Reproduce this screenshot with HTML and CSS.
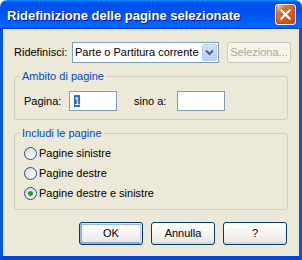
FILE: index.html
```html
<!DOCTYPE html>
<html lang="it">
<head>
    <meta charset="UTF-8">
    <title>Ridefinizione delle pagine selezionate</title>
    <link rel="stylesheet" href="styles.css">
</head>
<body>
    <div class="window">
        <div class="title-bar">
            <div class="title-text">Ridefinizione delle pagine selezionate</div>
            <div class="close-button">
                <svg width="13" height="13" viewBox="0 0 13 13">
                    <path d="M2.5 2.5 L10.5 10.5 M10.5 2.5 L2.5 10.5" stroke="#fff" stroke-width="2.2" stroke-linecap="square"/>
                </svg>
            </div>
        </div>

        <div class="window-body">
            <!-- riga combo -->
            <div class="row top-row">
                <span class="label redefine-label">Ridefinisci:</span>
                <div class="combo">
                    <span class="combo-text">Parte o Partitura corrente</span>
                    <span class="combo-arrow">
                        <svg width="9" height="7" viewBox="0 0 9 7">
                            <path d="M1 1.5 L4.5 5 L8 1.5" stroke="#4d6185" stroke-width="2" fill="none"/>
                        </svg>
                    </span>
                </div>
                <div class="button disabled select-button">Seleziona...</div>
            </div>

            <!-- ambito di pagine -->
            <fieldset class="group">
                <legend>Ambito di pagine</legend>
                <div class="row range-row">
                    <span class="label page-label">Pagina:</span>
                    <div class="text-input"><span class="selected">1</span></div>
                    <span class="label until-label">sino a:</span>
                    <div class="text-input"></div>
                </div>
            </fieldset>

            <!-- includi le pagine -->
            <fieldset class="group include-group">
                <legend>Includi le pagine</legend>
                <div class="radio-row">
                    <span class="radio"></span>
                    <span>Pagine sinistre</span>
                </div>
                <div class="radio-row">
                    <span class="radio"></span>
                    <span>Pagine destre</span>
                </div>
                <div class="radio-row">
                    <span class="radio checked"></span>
                    <span>Pagine destre e sinistre</span>
                </div>
            </fieldset>

            <div class="button-row">
                <div class="button default">OK</div>
                <div class="button">Annulla</div>
                <div class="button">?</div>
            </div>
        </div>
    </div>
</body>
</html>
```

FILE: styles.css
```css
body, html {
    margin: 0;
    padding: 0;
    width: 100%;
    height: 100%;
    overflow: hidden;
    background-color: #ffffff;
}

.window {
    width: 302px;
    height: 260px;
    display: flex;
    flex-direction: column;
    font-family: "Liberation Sans", Arial, sans-serif;
    font-size: 11px;
    line-height: 13px;
    color: #000;
}

/* barra del titolo */
.title-bar {
    height: 29px;
    flex-shrink: 0;
    display: flex;
    align-items: center;
    justify-content: space-between;
    padding: 0 6px 0 7px;
    box-sizing: border-box;
    border-radius: 7px 7px 0 0;
    background: linear-gradient(180deg, #0997ff, #0053ee 8%, #0050ee 40%, #0066ff 88%, #0066ff 93%, #005bff 95%, #003dd7 96%, #003dd7);
}

.title-text {
    font-family: "Liberation Sans", Arial, sans-serif;
    font-weight: bold;
    font-size: 13px;
    color: #fff;
    text-shadow: 1px 1px #0f1089;
    padding-top: 1px;
}

.close-button {
    width: 21px;
    height: 21px;
    box-sizing: border-box;
    border: 1px solid #fff;
    border-radius: 3px;
    display: flex;
    align-items: center;
    justify-content: center;
    background: radial-gradient(circle at 90% 90%, #cc4600 0, #dc6527 55%, #cd7546 70%, #ffccb2 90%, #fff 100%);
    box-shadow: inset 0 -1px 2px 1px #da4600;
}

/* corpo */
.window-body {
    flex-grow: 1;
    background-color: #ece9d8;
    border-left: 3px solid #0855dd;
    border-right: 3px solid #0855dd;
    border-bottom: 4px solid #0845d0;
    padding: 13px 8px 0 11px;
}

.row {
    display: flex;
    align-items: center;
}

.top-row {
    height: 21px;
}

.redefine-label {
    width: 58px;
}

.combo {
    width: 147px;
    height: 21px;
    box-sizing: border-box;
    border: 1px solid #7f9db9;
    background: #fff;
    display: flex;
    align-items: center;
    justify-content: space-between;
    padding: 1px 1px 1px 2px;
}

.combo-arrow {
    width: 15px;
    height: 17px;
    box-sizing: border-box;
    border: 1px solid #b9cdfb;
    border-radius: 2px;
    display: flex;
    align-items: center;
    justify-content: center;
    background: linear-gradient(180deg, #d6e3fd, #b8cdf9);
}

.button {
    width: 64px;
    height: 23px;
    box-sizing: border-box;
    border: 1px solid #003c74;
    border-radius: 3px;
    display: flex;
    align-items: center;
    justify-content: center;
    background: linear-gradient(180deg, #fff, #ecebe6 86%, #d6d0c5);
}

.button.default {
    box-shadow: inset -1px 1px #cee7ff, inset 1px 2px #98b8ea, inset -2px 2px #bcd4f6, inset 1px -1px #89ade4, inset 2px -2px #89ade4;
}

.select-button {
    height: 21px;
    margin-left: 8px;
    border-color: #c9c7ba;
    background: #f5f4ea;
    color: #aca899;
    white-space: nowrap;
}

/* gruppi */
.group {
    margin: 7px 0 0 0;
    width: 274px;
    box-sizing: border-box;
    border: 1px solid #d0d0bf;
    border-radius: 3px;
    padding: 8px 0 8px 9px;
    min-width: 0;
}

.group legend {
    color: #0046d5;
    padding: 0 2px;
    margin-left: -4px;
}

.text-input {
    width: 48px;
    height: 20px;
    box-sizing: border-box;
    border: 1px solid #7f9db9;
    background: #fff;
    padding: 3px 0 0 4px;
}

.selected {
    background: #316ac5;
    color: #fff;
}

.page-label {
    width: 45px;
}

.until-label {
    width: 43px;
    margin-left: 17px;
}

.include-group {
    padding: 3px 0 6px 9px;
}

.radio-row {
    height: 20px;
    display: flex;
    align-items: center;
    gap: 2px;
}

.radio {
    width: 13px;
    height: 13px;
    box-sizing: border-box;
    border: 1px solid #1c5180;
    border-radius: 50%;
    background: linear-gradient(135deg, #dcdcd7, #fff);
    display: flex;
    align-items: center;
    justify-content: center;
}

.radio.checked::after {
    content: "";
    width: 5px;
    height: 5px;
    border-radius: 50%;
    background: #21a121;
}

.button-row {
    display: flex;
    gap: 8px;
    margin: 12px 0 0 65px;
}
```
